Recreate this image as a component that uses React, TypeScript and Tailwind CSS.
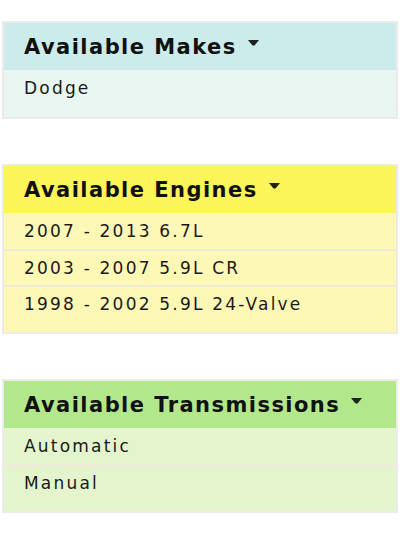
import React from "react";

type Panel = {
  title: string;
  items: string[];
  head: string;
  body: string;
};

const panels: Panel[] = [
  { title: "Available Makes", items: ["Dodge"], head: "bg-[#cbeceb]", body: "bg-[#eaf6f1]" },
  {
    title: "Available Engines",
    items: ["2007 - 2013 6.7L", "2003 - 2007 5.9L CR", "1998 - 2002 5.9L 24-Valve"],
    head: "bg-[#fbf55a]",
    body: "bg-[#fef8b6]",
  },
  { title: "Available Transmissions", items: ["Automatic", "Manual"], head: "bg-[#b3e78c]", body: "bg-[#e4f5cd]" },
];

function Caret() {
  return (
    <svg width="11" height="6" viewBox="0 0 11 6" className="ml-[11px] mb-[10px] shrink-0">
      <path d="M0 0 H11 L6.5 5.5 H4.5 Z" fill="#222" />
    </svg>
  );
}

function Box({ panel }: { panel: Panel }) {
  return (
    <div className="mx-[2px] border-2 border-[#ebebeb]">
      <div className={`${panel.head} flex h-[47px] items-center pl-[20px] pt-[2px]`}>
        <span className="text-[21px] font-bold tracking-[1.45px] text-[#111]">{panel.title}</span>
        <Caret />
      </div>
      <div className={`${panel.body} pb-[11px]`}>
        {panel.items.map((item, i) => (
          <div
            key={item}
            className={`flex h-[36px] items-center pl-[20px] pt-[2px] text-[17px] tracking-[2.2px] text-[#1a1a1a] ${
              i > 0 ? "border-t-2 border-[#eeecd9]" : ""
            }`}
          >
            {item}
          </div>
        ))}
      </div>
    </div>
  );
}

export default function App() {
  return (
    <div
      className="flex h-[536px] w-[400px] flex-col gap-[45px] bg-white pt-[21px]"
      style={{ fontFamily: '"DejaVu Sans", Verdana, sans-serif' }}
    >
      {panels.map((p) => (
        <Box key={p.title} panel={p} />
      ))}
    </div>
  );
}
